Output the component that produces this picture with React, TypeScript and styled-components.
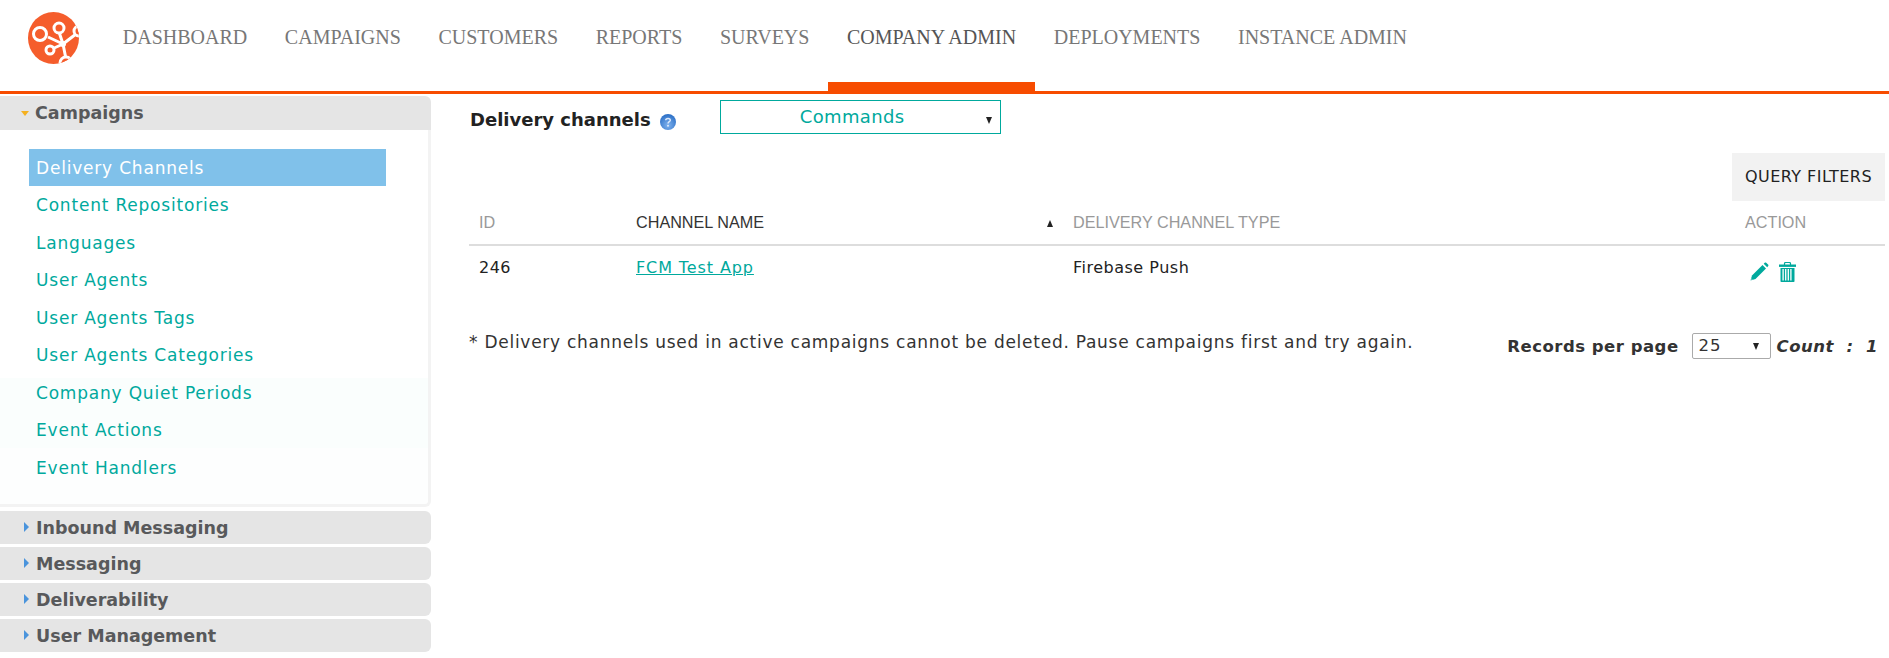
import React from "react";
import styled, { createGlobalStyle } from "styled-components";

const Global = createGlobalStyle`
  html, body { margin: 0; padding: 0; background: #fff; }
  body { font-family: "DejaVu Sans", sans-serif; width: 1889px; height: 658px; overflow: hidden; }
`;

const TEAL = "#00a99d";
const ORANGE = "#f74c00";

const Header = styled.header`
  display: flex;
  align-items: flex-start;
  height: 91px;
  border-bottom: 3px solid ${ORANGE};
`;
const LogoBox = styled.div`
  width: 104px;
  padding: 12px 0 0 28px;
  box-sizing: border-box;
  flex: none;
`;
const Nav = styled.nav`
  display: flex;
  height: 91px;
`;
const NavItem = styled.a<{ $active?: boolean }>`
  display: block;
  box-sizing: border-box;
  height: 91px;
  padding: 26px 18.8px 0;
  font-family: "Liberation Serif", serif;
  font-size: 20px;
  line-height: 23px;
  color: ${(p) => (p.$active ? "#555" : "#777")};
  border-bottom: ${(p) => (p.$active ? `9px solid ${ORANGE}` : "none")};
  white-space: nowrap;
`;
const Body = styled.div`
  display: flex;
  align-items: flex-start;
`;
const Sidebar = styled.aside`
  width: 431px;
  flex: none;
  padding-top: 2px;
`;
const SectionHead = styled.div<{ $open?: boolean }>`
  display: flex;
  align-items: center;
  height: ${(p) => (p.$open ? "34px" : "33px")};
  box-sizing: border-box;
  background: #e5e5e5;
  border-radius: ${(p) => (p.$open ? "0 6px 0 0" : "0 6px 6px 0")};
  margin-bottom: ${(p) => (p.$open ? "0" : "3px")};
  padding-left: ${(p) => (p.$open ? "21px" : "24px")};
  font-size: 17.5px;
  font-weight: bold;
  color: #58595b;
`;
const ArrowDown = styled.span`
  width: 0;
  height: 0;
  border-left: 4.5px solid transparent;
  border-right: 4.5px solid transparent;
  border-top: 5px solid #f5b120;
  margin-right: 6px;
`;
const ArrowRight = styled.span`
  width: 0;
  height: 0;
  border-top: 5px solid transparent;
  border-bottom: 5px solid transparent;
  border-left: 5px solid #4a94dc;
  margin-right: 7px;
  margin-top: -2px;
`;
const Panel = styled.div`
  box-sizing: border-box;
  height: 377px;
  margin-bottom: 4px;
  padding: 19px 0 0 29px;
  border-right: 3px solid #f3f3f3;
  border-bottom: 3px solid #f3f3f3;
  border-radius: 0 0 6px 0;
  background: linear-gradient(#fff 0, #fff 248px, #fafefd 248px, #fafefd 318px, #fdfefe 318px);
`;
const MenuItem = styled.a<{ $active?: boolean }>`
  display: block;
  box-sizing: border-box;
  width: 357px;
  height: ${(p) => (p.$active ? "37px" : "37.5px")};
  line-height: 39px;
  padding-left: 7px;
  font-size: 17px;
  letter-spacing: 0.8px;
  color: ${(p) => (p.$active ? "#fff" : TEAL)};
  background: ${(p) => (p.$active ? "#80c1ea" : "transparent")};
  white-space: nowrap;
`;
const Main = styled.main`
  flex: 1;
  min-width: 0;
  padding: 6px 4px 0 38px;
`;
const TitleRow = styled.div`
  display: flex;
  align-items: flex-start;
  height: 53px;
`;
const Title = styled.h1`
  margin: 6px 0 0 1px;
  font-size: 18px;
  line-height: 27px;
  font-weight: bold;
  color: #222;
  white-space: nowrap;
`;
const Help = styled.span`
  margin: 13px 0 0 8px;
  flex: none;
  display: block;
  line-height: 0;
`;
const ChannelSelect = styled.div`
  position: relative;
  margin-left: 43px;
  box-sizing: border-box;
  width: 281px;
  height: 34px;
  border: 1px solid ${TEAL};
  font-size: 18px;
  letter-spacing: 0.35px;
  line-height: 32px;
  color: ${TEAL};
  text-align: center;
  padding-right: 16px;
`;
const Caret = styled.span<{ $up?: boolean }>`
  display: inline-block;
  width: 0;
  height: 0;
  border-left: 3.5px solid transparent;
  border-right: 3.5px solid transparent;
  ${(p) => (p.$up ? "border-bottom: 7px solid #222;" : "border-top: 7px solid #222;")}
`;
const SelectCaret = styled(Caret)`
  position: absolute;
  right: 8px;
  top: 16px;
`;
const FilterRow = styled.div`
  display: flex;
  justify-content: flex-end;
`;
const FilterButton = styled.div`
  box-sizing: border-box;
  width: 153px;
  height: 48px;
  padding-left: 13px;
  background: #f2f2f2;
  font-size: 16px;
  line-height: 48px;
  letter-spacing: 0.45px;
  color: #222;
  white-space: nowrap;
`;
const TableGrid = styled.div`
  display: grid;
  grid-template-columns: 157px 437px 672px 1fr;
`;
const HeadCell = styled.div<{ $dark?: boolean }>`
  display: flex;
  align-items: center;
  justify-content: space-between;
  height: 45px;
  padding: 0 10px 0 10px;
  box-sizing: border-box;
  border-bottom: 2px solid #ddd;
  font-family: "Liberation Sans", sans-serif;
  font-size: 16.2px;
  line-height: 45px;
  color: ${(p) => (p.$dark ? "#333" : "#999")};
  white-space: nowrap;
`;
const SortCaret = styled(Caret)`
  margin-right: 0;
  margin-top: 2px;
`;
const Cell = styled.div`
  height: 43px;
  padding: 0 10px;
  font-size: 16px;
  letter-spacing: 0.5px;
  line-height: 44px;
  color: #222;
  white-space: nowrap;
`;
const LinkText = styled.a`
  color: ${TEAL};
  text-decoration: underline;
  letter-spacing: 0.9px;
`;
const Actions = styled.div`
  display: flex;
  align-items: flex-start;
  gap: 10px;
  height: 43px;
  padding: 16px 0 0 15px;
  box-sizing: border-box;
`;
const FooterRow = styled.div`
  display: flex;
  justify-content: space-between;
  align-items: flex-start;
  margin-top: 41px;
`;
const Note = styled.p`
  margin: 0;
  font-size: 17px;
  letter-spacing: 0.74px;
  line-height: 24px;
  color: #333;
  white-space: nowrap;
`;
const Pager = styled.div`
  display: flex;
  align-items: center;
  height: 26px;
  margin-top: 3px;
  padding-right: 7px;
  font-size: 16.5px;
  letter-spacing: 0.5px;
  color: #333;
  white-space: nowrap;
`;
const PagerLabel = styled.span`
  font-weight: bold;
  margin-right: 13px;
`;
const PageSelect = styled.div`
  position: relative;
  box-sizing: border-box;
  width: 79px;
  height: 26px;
  border: 1px solid #aaa;
  border-radius: 2px;
  padding-left: 6px;
  line-height: 24px;
  letter-spacing: 1px;
  margin-right: 6px;
`;
const PageCaret = styled(Caret)`
  position: absolute;
  right: 11px;
  top: 9px;
`;
const CountText = styled.span`
  font-weight: bold;
  font-style: italic;
  white-space: pre;
`;

const Logo = () => (
  <svg width="51" height="52" viewBox="0 0 51 52">
    <defs>
      <clipPath id="logoClip"><ellipse cx="25.5" cy="26" rx="25.5" ry="26" /></clipPath>
    </defs>
    <ellipse cx="25.5" cy="26" rx="25.5" ry="26" fill="#f55d2c" />
    <g clipPath="url(#logoClip)" stroke="#fff" strokeWidth="3" fill="#f55d2c">
      <path d="M35 32 L20 25 M35 32 L31 20 M35 32 L48 22 M35 32 L24 37 M35 32 L38 47" fill="none" />
      <circle cx="12" cy="22" r="6.5" />
      <circle cx="31" cy="16" r="5" />
      <circle cx="51" cy="19" r="5" />
      <circle cx="22" cy="38" r="4" />
      <circle cx="38" cy="51" r="6" />
      <circle cx="35" cy="32" r="3" fill="#fff" stroke="none" />
    </g>
  </svg>
);

const HelpIcon = () => (
  <svg width="18" height="18" viewBox="0 0 18 18">
    <defs>
      <radialGradient id="helpG" cx="50%" cy="70%" r="65%">
        <stop offset="0" stopColor="#7fb2ee" />
        <stop offset="1" stopColor="#2f72c8" />
      </radialGradient>
    </defs>
    <circle cx="9" cy="9" r="8" fill="url(#helpG)" />
    <path d="M6.7 7.2 C6.8 4.8 11.3 4.8 11.3 7.2 C11.3 8.7 9 8.7 9 10.5" fill="none" stroke="#dce9fb" strokeWidth="1.5" />
    <circle cx="9" cy="12.8" r="1" fill="#dce9fb" />
  </svg>
);

const Pencil = () => (
  <svg width="19" height="19" viewBox="0 0 19 19">
    <path d="M0.5 18.5 L2 13.5 L12.5 3 L16 6.5 L5.5 17 Z" fill={TEAL} />
    <path d="M13.7 1.8 L15 0.6 Q15.6 0.2 16.2 0.7 L18.3 2.8 Q18.7 3.4 18.2 4 L17.2 5.3 Z" fill={TEAL} />
    <path d="M0.3 18.7 L1 15.8 L3.2 18 Z" fill="#fff" opacity="0.35" />
  </svg>
);

const Trash = () => (
  <svg width="17" height="20" viewBox="0 0 17 20">
    <path d="M5.5 3 V1.6 Q5.5 0.5 6.7 0.5 H10.3 Q11.5 0.5 11.5 1.6 V3" fill="none" stroke={TEAL} strokeWidth="1.2" />
    <rect x="0" y="2.5" width="17" height="2.4" fill={TEAL} />
    <path d="M1.5 6 H15.5 V19.2 Q15.5 20 14.7 20 H2.3 Q1.5 20 1.5 19.2 Z" fill={TEAL} />
    <path d="M3.7 7 V18.4 M6.3 7 V18.4 M8.9 7 V18.4 M11.5 7 V18.4" stroke="#fff" strokeWidth="1.3" transform="translate(0.4 0)" />
  </svg>
);

const navItems = ["DASHBOARD", "CAMPAIGNS", "CUSTOMERS", "REPORTS", "SURVEYS", "COMPANY ADMIN", "DEPLOYMENTS", "INSTANCE ADMIN"];
const menuItems = ["Delivery Channels", "Content Repositories", "Languages", "User Agents", "User Agents Tags", "User Agents Categories", "Company Quiet Periods", "Event Actions", "Event Handlers"];
const otherSections = ["Inbound Messaging", "Messaging", "Deliverability", "User Management"];

export default function App() {
  return (
    <>
      <Global />
      <Header>
        <LogoBox><Logo /></LogoBox>
        <Nav>
          {navItems.map((n) => (
            <NavItem key={n} $active={n === "COMPANY ADMIN"}>{n}</NavItem>
          ))}
        </Nav>
      </Header>
      <Body>
        <Sidebar>
          <SectionHead $open><ArrowDown />Campaigns</SectionHead>
          <Panel>
            {menuItems.map((m, i) => (
              <MenuItem key={m} $active={i === 0}>{m}</MenuItem>
            ))}
          </Panel>
          {otherSections.map((s) => (
            <SectionHead key={s}><ArrowRight />{s}</SectionHead>
          ))}
        </Sidebar>
        <Main>
          <TitleRow>
            <Title>Delivery channels</Title>
            <Help><HelpIcon /></Help>
            <ChannelSelect>Commands<SelectCaret /></ChannelSelect>
          </TitleRow>
          <FilterRow><FilterButton>QUERY FILTERS</FilterButton></FilterRow>
          <TableGrid>
            <HeadCell>ID</HeadCell>
            <HeadCell $dark>CHANNEL NAME<SortCaret $up /></HeadCell>
            <HeadCell>DELIVERY CHANNEL TYPE</HeadCell>
            <HeadCell>ACTION</HeadCell>
            <Cell>246</Cell>
            <Cell><LinkText>FCM Test App</LinkText></Cell>
            <Cell>Firebase Push</Cell>
            <Actions><Pencil /><Trash /></Actions>
          </TableGrid>
          <FooterRow>
            <Note>* Delivery channels used in active campaigns cannot be deleted. Pause campaigns first and try again.</Note>
            <Pager>
              <PagerLabel>Records per page</PagerLabel>
              <PageSelect>25<PageCaret /></PageSelect>
              <CountText>Count  :  1</CountText>
            </Pager>
          </FooterRow>
        </Main>
      </Body>
    </>
  );
}
